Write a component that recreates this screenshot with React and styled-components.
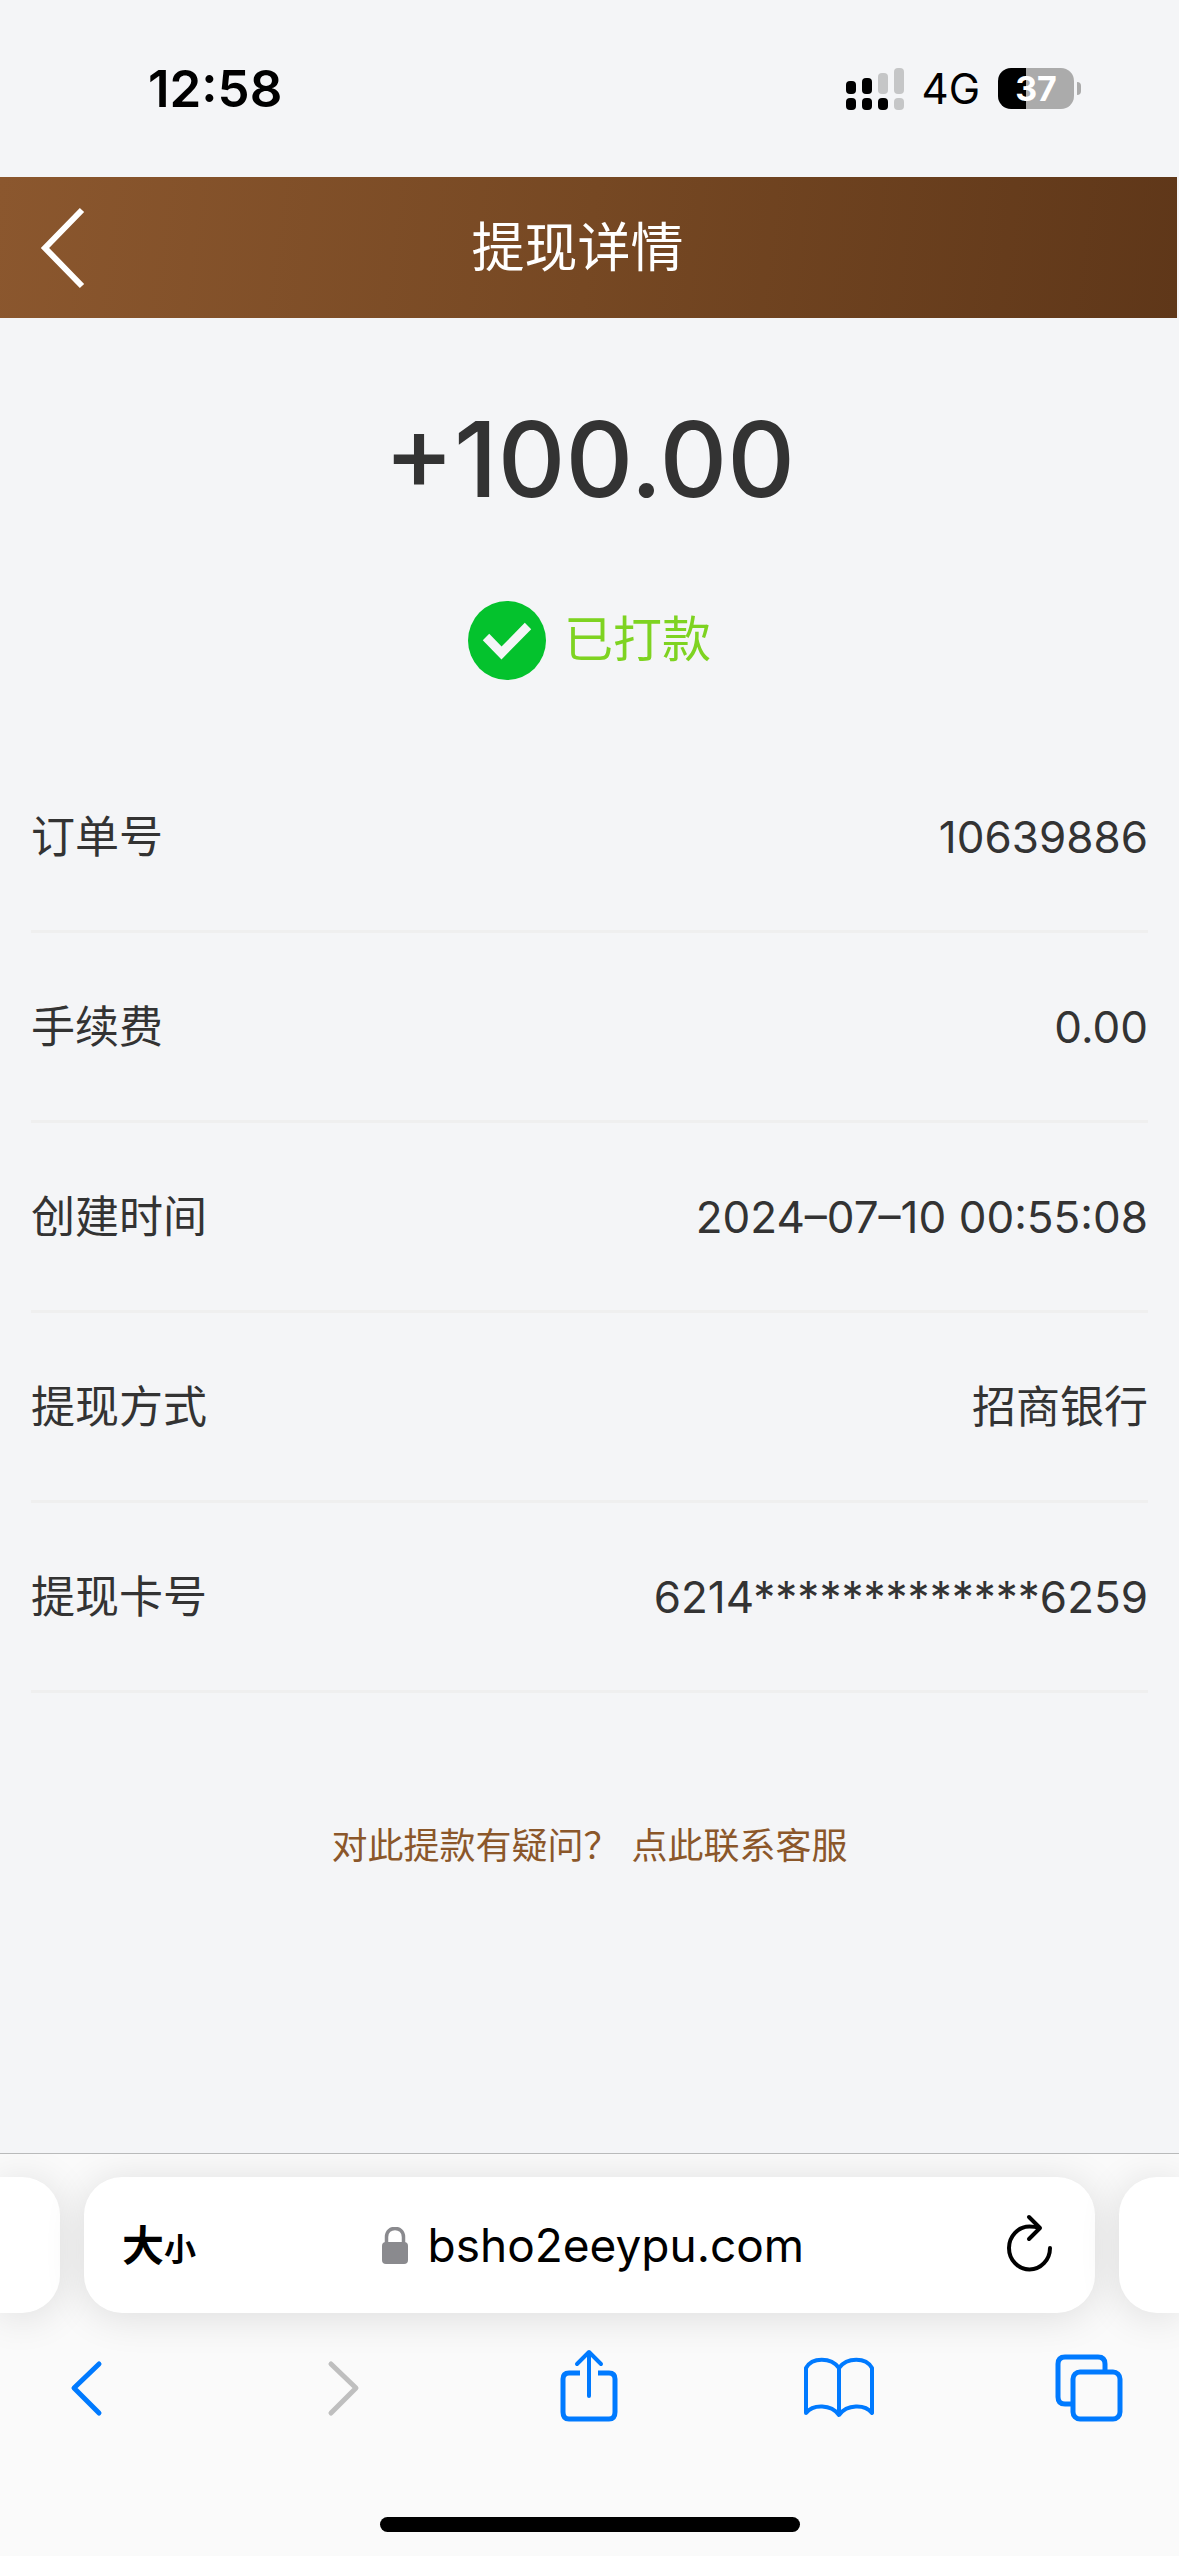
import React from 'react';
import styled, {createGlobalStyle} from 'styled-components';

const GlobalStyle = createGlobalStyle`
    * {
        box-sizing: border-box;
    }

    body {
        margin: 0;
        background-color: #F4F5F7;
        color: #333;
        font-family: Inter, 'Noto Sans CJK SC', sans-serif;
    }

    button {
        padding: 0;
        border: none;
        background: none;
        color: inherit;
        font-family: inherit;
        cursor: pointer;
    }

    svg {
        display: block;
    }
`;

const Page = styled.div`
    display: flex;
    flex-direction: column;
    min-height: 100vh;
`;

const StatusBar = styled.div`
    display: flex;
    justify-content: space-between;
    align-items: center;
    height: 177px;
    padding: 0 98px 0 148px;
    color: #000;
`;

const Time = styled.span`
    font-size: 51px;
    font-weight: 600;
`;

const StatusIcons = styled.div`
    display: flex;
    align-items: center;
    gap: 18px;
`;

const Network = styled.span`
    font-size: 42px;
`;

const Battery = styled.div`
    display: flex;
    align-items: center;
    gap: 3px;
`;

const BatteryLevel = styled.div`
    display: flex;
    justify-content: center;
    align-items: center;
    width: 76px;
    height: 41px;
    border-radius: 13px;
    background: linear-gradient(to right, #000 ${props => props.$level}%, #ABABAB ${props => props.$level}%);
    color: #FFF;
    font-size: 34px;
    font-weight: 700;
`;

const BatteryTip = styled.div`
    width: 4px;
    height: 13px;
    border-radius: 0 4px 4px 0;
    background-color: #ABABAB;
`;

const Header = styled.header`
    display: grid;
    grid-template-columns: 88px 1fr 110px;
    align-items: center;
    height: 141px;
    margin-right: 2px;
    background: linear-gradient(97deg, #8B572E, #764823 50%, #5F3719);
    color: #FFF;
`;

const HeaderBack = styled.button`
    justify-self: end;
`;

const Title = styled.h1`
    margin: 0;
    font-size: 53px;
    font-weight: 400;
    line-height: 76px;
    text-align: center;
`;

const Main = styled.main`
    padding: 81px 31px;
`;

const Amount = styled.div`
    font-size: 105px;
    font-weight: 500;
    line-height: 120px;
    text-align: center;
`;

const PayStatus = styled.div`
    display: flex;
    justify-content: center;
    align-items: center;
    gap: 18px;
    height: 80px;
    margin: 81px 0 63px;
    color: #7ED321;
    font-size: 49px;
    line-height: 70px;
`;

const Details = styled.dl`
    margin: 0;
`;

const Row = styled.div`
    display: flex;
    justify-content: space-between;
    align-items: center;
    height: 190px;
    border-bottom: 3px solid #EFEFEF;
    font-size: 44px;
    line-height: 64px;

    & dd {
        margin: 0;
    }
`;

const Contact = styled.p`
    display: flex;
    justify-content: center;
    gap: 12px;
    margin: 127px 0 0;
    color: #8B572A;
    font-size: 36px;
    line-height: 52px;

    & a {
        color: inherit;
        text-decoration: none;
    }
`;

const BrowserBar = styled.footer`
    margin-top: auto;
    overflow: hidden;
    border-top: 1px solid #B9BABB;
    background-color: #FAFAFA;
    color: #000;
`;

const Tabs = styled.div`
    display: flex;
    gap: 24px;
    padding-top: 23px;
`;

const Tab = styled.div`
    width: 60px;
    height: 136px;
    border-radius: ${props => props.$side === 'left' ? '0 38px 38px 0' : '38px 0 0 38px'};
    background-color: #FFF;
    box-shadow: 0 4px 40px rgba(0, 0, 0, 0.12);
`;

const AddressBar = styled.div`
    display: grid;
    grid-template-columns: 80px 1fr 70px;
    align-items: center;
    flex: 1;
    height: 136px;
    padding: 0 42px 0 38px;
    border-radius: 38px;
    background-color: #FFF;
    box-shadow: 0 4px 40px rgba(0, 0, 0, 0.12);
`;

const TextSize = styled.button`
    padding-top: 6px;
    font-size: 42px;
    font-weight: 700;
    line-height: 64px;
    text-align: left;
    white-space: nowrap;

    & small {
        font-size: 32px;
    }
`;

const Address = styled.div`
    display: flex;
    justify-content: center;
    align-items: center;
    gap: 20px;
`;

const AddressInput = styled.input`
    width: 376px;
    padding: 0;
    border: none;
    outline: none;
    background: none;
    color: #000;
    font-family: inherit;
    font-size: 46px;
    line-height: 64px;
`;

const Reload = styled.button`
    justify-self: end;
`;

const Toolbar = styled.nav`
    display: flex;
    justify-content: space-between;
    padding: 35px 49px 89px 47px;
    color: #007AFF;

    & button:disabled {
        color: #BFBFBF;
    }
`;

const HomeIndicator = styled.div`
    width: 420px;
    height: 15px;
    margin: 0 auto 24px;
    border-radius: 8px;
    background-color: #000;
`;

const ToolIcon = ({children}) => (
    <svg width='80' height='80' viewBox='0 0 80 80' fill='none' stroke='currentColor' strokeWidth='5' strokeLinecap='round' strokeLinejoin='round'>
        {children}
    </svg>
);

const SignalIcon = () => (
    <svg width='58' height='42' viewBox='0 0 58 42'>
        <rect x='0' y='13' width='10' height='13' rx='4' />
        <rect x='16' y='10' width='10' height='16' rx='4' />
        <rect x='32' y='5' width='10' height='21' rx='4' fill='#C5C6C7' />
        <rect x='48' y='0' width='10' height='26' rx='4' fill='#C5C6C7' />
        <rect x='0' y='30' width='10' height='12' rx='4' />
        <rect x='16' y='30' width='10' height='12' rx='4' />
        <rect x='32' y='30' width='10' height='12' rx='4' />
        <rect x='48' y='30' width='10' height='12' rx='4' fill='#C5C6C7' />
    </svg>
);

const CheckIcon = () => (
    <svg width='78' height='79' viewBox='0 0 78 79'>
        <ellipse cx='39' cy='39.500' rx='39' ry='39.500' fill='#04C22D' />
        <path d='M18 36 L33.500 52 L60 25' fill='none' stroke='#F4F5F7' strokeWidth='9' />
    </svg>
);

const LockIcon = () => (
    <svg width='26' height='37' viewBox='0 0 26 37'>
        <path d='M4.500 17 V10 C4.500 -1.500 21.500 -1.500 21.500 10 V17' fill='none' stroke='#8A8A8E' strokeWidth='3.500' />
        <rect x='0' y='15' width='26' height='22' rx='4' fill='#8A8A8E' />
    </svg>
);

const ReloadIcon = () => (
    <svg width='46' height='62' viewBox='0 0 46 62' fill='none' stroke='currentColor' strokeWidth='4' strokeLinecap='round' strokeLinejoin='round'>
        <path d='M43 34 A20.500 21.500 0 1 1 22.500 12.500 Q28 12.500 32 14' />
        <path d='M22 3 L33 14 L22 25' />
    </svg>
);

const details = [
    {label: '订单号', value: '10639886'},
    {label: '手续费', value: '0.00'},
    {label: '创建时间', value: '2024–07–10 00:55:08'},
    {label: '提现方式', value: '招商银行'},
    {label: '提现卡号', value: '6214*************6259'}
];

const App = () => (
    <Page>
        <GlobalStyle />

        <StatusBar>
            <Time>12:58</Time>

            <StatusIcons>
                <SignalIcon />
                <Network>4G</Network>
                <Battery>
                    <BatteryLevel $level={37}>37</BatteryLevel>
                    <BatteryTip />
                </Battery>
            </StatusIcons>
        </StatusBar>

        <Header>
            <HeaderBack aria-label='返回'>
                <svg width='48' height='84' viewBox='0 0 48 84' fill='none' stroke='currentColor' strokeWidth='6'>
                    <path d='M42 4 L5 42 L42 80' />
                </svg>
            </HeaderBack>
            <Title>提现详情</Title>
        </Header>

        <Main>
            <Amount>+100.00</Amount>

            <PayStatus>
                <CheckIcon />
                <span>已打款</span>
            </PayStatus>

            <Details>
                {details.map(({label, value}) => (
                    <Row key={label}>
                        <dt>{label}</dt>
                        <dd>{value}</dd>
                    </Row>
                ))}
            </Details>

            <Contact>
                <span>对此提款有疑问？</span>
                <a href='#service'>点此联系客服</a>
            </Contact>
        </Main>

        <BrowserBar>
            <Tabs>
                <Tab $side='left' />
                <AddressBar>
                    <TextSize>大<small>小</small></TextSize>
                    <Address>
                        <LockIcon />
                        <AddressInput aria-label='网址' defaultValue='bsho2eeypu.com' />
                    </Address>
                    <Reload aria-label='重新载入'>
                        <ReloadIcon />
                    </Reload>
                </AddressBar>
                <Tab $side='right' />
            </Tabs>

            <Toolbar>
                <button aria-label='后退'>
                    <ToolIcon>
                        <path d='M52 16 L27 40 L52 65' />
                    </ToolIcon>
                </button>
                <button aria-label='前进' disabled>
                    <ToolIcon>
                        <path d='M33 16 L58 40 L33 65' />
                    </ToolIcon>
                </button>
                <button aria-label='分享'>
                    <ToolIcon>
                        <path d='M31 25 H20 Q14 25 14 31 V64 Q14 71 20 71 H60 Q66 71 66 64 V31 Q66 25 60 25 H49' strokeLinecap='butt' />
                        <path d='M40 48 V5 M28 16 L40 4 L52 16' strokeWidth='4' />
                    </ToolIcon>
                </button>
                <button aria-label='书签'>
                    <ToolIcon>
                        <path d='M40 20 C32 9 13 9 7 20 V65 C14 56 32 56 40 67 C48 56 66 56 73 65 V20 C67 9 48 9 40 20 Z M40 20 V66' strokeWidth='4' />
                    </ToolIcon>
                </button>
                <button aria-label='标签页'>
                    <ToolIcon>
                        <rect x='23' y='24' width='47' height='47' rx='7' />
                        <path d='M55 24 V16 Q55 9 48 9 H15 Q8 9 8 16 V49 Q8 56 15 56 H23' strokeLinecap='butt' />
                    </ToolIcon>
                </button>
            </Toolbar>

            <HomeIndicator />
        </BrowserBar>
    </Page>
);

export default App;
